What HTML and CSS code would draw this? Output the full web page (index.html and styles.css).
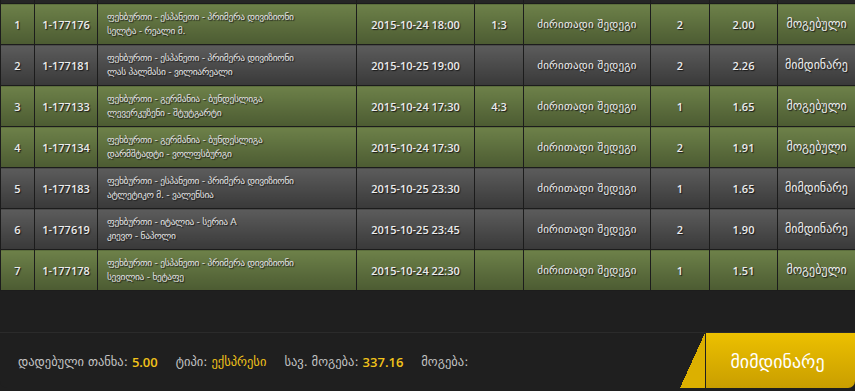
FILE: index.html
```html
<!DOCTYPE html>
<html lang="ka">
<head>
<meta charset="utf-8">
<title>ბილეთი</title>
<link rel="stylesheet" href="styles.css">
</head>
<body>
<div class="page">
  <table class="bets">
    <colgroup>
      <col style="width:34px"><col style="width:63px"><col style="width:259px"><col style="width:118px"><col style="width:49px"><col style="width:127px"><col style="width:59px"><col style="width:68px"><col>
    </colgroup>
    <tr class="stub"><td></td><td></td><td></td><td></td><td></td><td></td><td></td><td></td><td></td></tr>
    <tr class="green">
      <td class="num">1</td><td class="num">1-177176</td>
      <td class="ev"><span>ფეხბურთი - ესპანეთი - პრიმერა დივიზიონი</span><span>სელტა - რეალი მ.</span></td>
      <td class="num">2015-10-24 18:00</td><td class="num">1:3</td><td class="geo">ძირითადი შედეგი</td><td class="num">2</td><td class="num">2.00</td><td class="st">მოგებული</td>
    </tr>
    <tr class="gray">
      <td class="num">2</td><td class="num">1-177181</td>
      <td class="ev"><span>ფეხბურთი - ესპანეთი - პრიმერა დივიზიონი</span><span>ლას პალმასი - ვილიარეალი</span></td>
      <td class="num">2015-10-25 19:00</td><td class="num"></td><td class="geo">ძირითადი შედეგი</td><td class="num">2</td><td class="num">2.26</td><td class="st">მიმდინარე</td>
    </tr>
    <tr class="green">
      <td class="num">3</td><td class="num">1-177133</td>
      <td class="ev"><span>ფეხბურთი - გერმანია - ბუნდესლიგა</span><span>ლევერკუზენი - შტუტგარტი</span></td>
      <td class="num">2015-10-24 17:30</td><td class="num">4:3</td><td class="geo">ძირითადი შედეგი</td><td class="num">1</td><td class="num">1.65</td><td class="st">მოგებული</td>
    </tr>
    <tr class="green">
      <td class="num">4</td><td class="num">1-177134</td>
      <td class="ev"><span>ფეხბურთი - გერმანია - ბუნდესლიგა</span><span>დარმშტადტი - ვოლფსბურგი</span></td>
      <td class="num">2015-10-24 17:30</td><td class="num"></td><td class="geo">ძირითადი შედეგი</td><td class="num">2</td><td class="num">1.91</td><td class="st">მოგებული</td>
    </tr>
    <tr class="gray">
      <td class="num">5</td><td class="num">1-177183</td>
      <td class="ev"><span>ფეხბურთი - ესპანეთი - პრიმერა დივიზიონი</span><span>ატლეტიკო მ. - ვალენსია</span></td>
      <td class="num">2015-10-25 23:30</td><td class="num"></td><td class="geo">ძირითადი შედეგი</td><td class="num">1</td><td class="num">1.65</td><td class="st">მიმდინარე</td>
    </tr>
    <tr class="gray">
      <td class="num">6</td><td class="num">1-177619</td>
      <td class="ev"><span>ფეხბურთი - იტალია - სერია A</span><span>კიევო - ნაპოლი</span></td>
      <td class="num">2015-10-25 23:45</td><td class="num"></td><td class="geo">ძირითადი შედეგი</td><td class="num">2</td><td class="num">1.90</td><td class="st">მიმდინარე</td>
    </tr>
    <tr class="green">
      <td class="num">7</td><td class="num">1-177178</td>
      <td class="ev"><span>ფეხბურთი - ესპანეთი - პრიმერა დივიზიონი</span><span>სევილია - ხეტაფე</span></td>
      <td class="num">2015-10-24 22:30</td><td class="num"></td><td class="geo">ძირითადი შედეგი</td><td class="num">1</td><td class="num">1.51</td><td class="st">მოგებული</td>
    </tr>
  </table>
  <div class="spacer"></div>
  <div class="footer">
    <div class="info">
      <span class="lbl">დადებული თანხა:</span><span class="val">5.00</span>
      <span class="lbl">ტიპი:</span><span class="val geo-val">ექსპრესი</span>
      <span class="lbl">სავ. მოგება:</span><span class="val">337.16</span>
      <span class="lbl">მოგება:</span>
    </div>
    <div class="status-btn">
      <div class="slant"></div>
      <div class="btn">მიმდინარე</div>
    </div>
  </div>
</div>
</body>
</html>
```

FILE: styles.css
```css
html, body {
  margin: 0;
  padding: 0;
  background: #131313;
}
.page {
  width: 855px;
  height: 391px;
  overflow: hidden;
  background: #1f1f1f;
  font-family: "Open Sans", "DejaVu Sans", sans-serif;
}
.bets {
  width: 855px;
  table-layout: fixed;
  border-collapse: collapse;
}
.bets td {
  border: 1px solid #1c1c1c;
  padding: 0;
  text-align: center;
  color: #ececec;
  text-shadow: 1px 1px 1px #1a1a1a;
  height: 40px;
  font-size: 11px;
  white-space: nowrap;
  overflow: hidden;
}
.bets tr td:last-child { border-right: none; }
.bets tr.stub td {
  height: 3px;
  background: #262626;
  border-top: none;
}
.green td {
  background: linear-gradient(#6d8149, #4c5b32);
}
.gray td {
  background: linear-gradient(#5c5c5c, #393939);
}
.num {
  font-family: "Open Sans", sans-serif;
  font-weight: 600;
}
.ev {
  text-align: left !important;
  padding-left: 9px !important;
  font-family: "DejaVu Sans", sans-serif;
  font-size: 9.5px !important;
  letter-spacing: -0.35px;
  line-height: 14px;
  color: #e2e2e2 !important;
}
.ev span { display: block; }
.geo {
  font-family: "DejaVu Sans", sans-serif;
  font-size: 11px !important;
  letter-spacing: 0.2px;
}
.st {
  font-family: "DejaVu Sans", sans-serif;
  font-size: 12px !important;
}
.spacer {
  height: 41px;
  border-bottom: 1px solid #2b2b2b;
}
.footer {
  height: 55px;
  display: flex;
  align-items: stretch;
  background: #1f1f1f;
  border-bottom-left-radius: 7px;
  border-bottom-right-radius: 7px;
}
.info {
  flex: 1;
  display: flex;
  align-items: center;
  padding-left: 18px;
  padding-top: 2px;
  font-size: 12.5px;
}
.lbl {
  font-family: "DejaVu Sans", sans-serif;
  color: #c4c4c4;
}
.val {
  font-family: "Open Sans", sans-serif;
  font-weight: 600;
  color: #f2c31a;
  margin-left: 4px;
  margin-right: 18px;
  font-size: 13px;
}
.geo-val {
  font-family: "DejaVu Sans", sans-serif;
  font-weight: normal;
  font-size: 12.5px;
}
.status-btn {
  display: flex;
  width: 175px;
}
.slant {
  width: 25px;
  background: linear-gradient(to bottom right, transparent 50%, #dcb000 50%);
}
.btn {
  flex: 1;
  border-left: 1px solid #1f1f1f;
  background: linear-gradient(#ecc000, #c99e00);
  border-bottom-right-radius: 7px;
  color: #fff;
  font-family: "DejaVu Sans", sans-serif;
  font-size: 18px;
  display: flex;
  align-items: center;
  justify-content: center;
  padding-top: 2px;
  padding-right: 6px;
}
```
